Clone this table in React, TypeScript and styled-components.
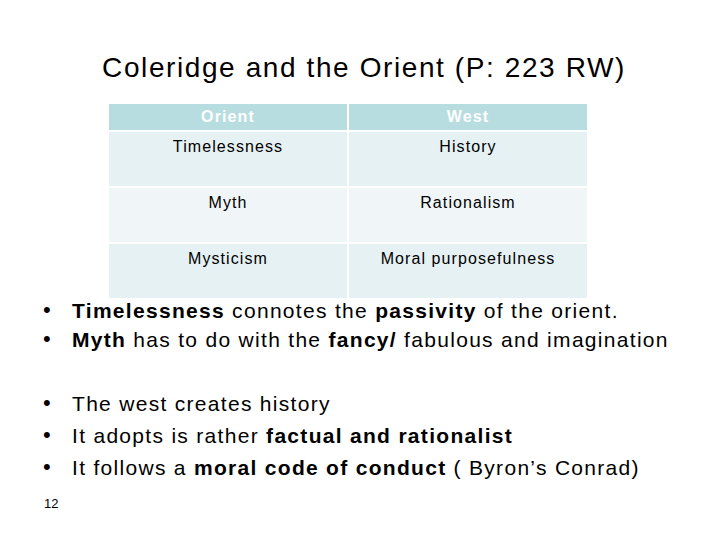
import React from 'react'
import styled, { createGlobalStyle } from 'styled-components'

const GlobalStyle = createGlobalStyle`
  html, body {
    margin: 0;
    padding: 0;
    background: #fff;
  }
  body {
    font-family: "Liberation Sans", Arial, sans-serif;
    color: #000;
  }
`

const Slide = styled.div`
  width: 720px;
  height: 540px;
  box-sizing: border-box;
  padding-top: 49px;
  display: flex;
  flex-direction: column;
  position: relative;
  overflow: hidden;
`

const Title = styled.h1`
  margin: 0;
  font-size: 28px;
  font-weight: normal;
  letter-spacing: 0.057em;
  text-align: center;
  line-height: 38px;
  padding-left: 8px;
`

const Table = styled.div`
  margin: 17px 0 0 109px;
  width: 478px;
  display: grid;
  grid-template-columns: 238px 238px;
  gap: 2px;
`

const HeadCell = styled.div`
  background: #b7dde1;
  color: #fff;
  font-weight: bold;
  font-size: 16px;
  letter-spacing: 0.07em;
  height: 26px;
  line-height: 25px;
  text-align: center;
`

const Cell = styled.div<{ $light?: boolean }>`
  background: ${p => (p.$light ? '#f0f6f8' : '#e6f1f3')};
  font-size: 16px;
  letter-spacing: 0.068em;
  height: 54px;
  box-sizing: border-box;
  padding-top: 6px;
  text-align: center;
`

const BulletList = styled.ul<{ $gap: number; $top: number }>`
  list-style: none;
  margin: ${p => p.$top}px 0 0;
  padding: 0 0 0 43px;
  font-size: 21px;
  letter-spacing: 1.3px;
  display: flex;
  flex-direction: column;
  gap: ${p => p.$gap}px;
`

const Item = styled.li`
  display: flex;
  align-items: center;
  line-height: 26px;
  &::before {
    content: '•';
    width: 29px;
    flex: none;
    font-size: 22px;
    letter-spacing: 0;
    margin-top: -2px;
  }
`

const Footer = styled.div`
  position: absolute;
  left: 44px;
  top: 496px;
  font-size: 13px;
`

const rows = [
  ['Timelessness', 'History'],
  ['Myth', 'Rationalism'],
  ['Mysticism', 'Moral purposefulness'],
]

export default function App() {
  return (
    <>
      <GlobalStyle />
      <Slide>
        <Title>Coleridge and the Orient (P: 223 RW)</Title>
        <Table>
          <HeadCell>Orient</HeadCell>
          <HeadCell>West</HeadCell>
          {rows.map((r, i) =>
            r.map(c => (
              <Cell key={c} $light={i === 1}>
                {c}
              </Cell>
            ))
          )}
        </Table>
        <BulletList $gap={3} $top={0}>
          <Item>
            <span>
              <b>Timelessness</b> connotes the <b>passivity</b> of the orient.
            </span>
          </Item>
          <Item>
            <span>
              <b>Myth</b> has to do with the <b>fancy/</b> fabulous and imagination
            </span>
          </Item>
        </BulletList>
        <BulletList $gap={6} $top={38}>
          <Item>The west creates history</Item>
          <Item>
            <span>
              It adopts is rather <b>factual and rationalist</b>
            </span>
          </Item>
          <Item>
            <span>
              It follows a <b>moral code of conduct</b> ( Byron’s Conrad)
            </span>
          </Item>
        </BulletList>
        <Footer>12</Footer>
      </Slide>
    </>
  )
}
